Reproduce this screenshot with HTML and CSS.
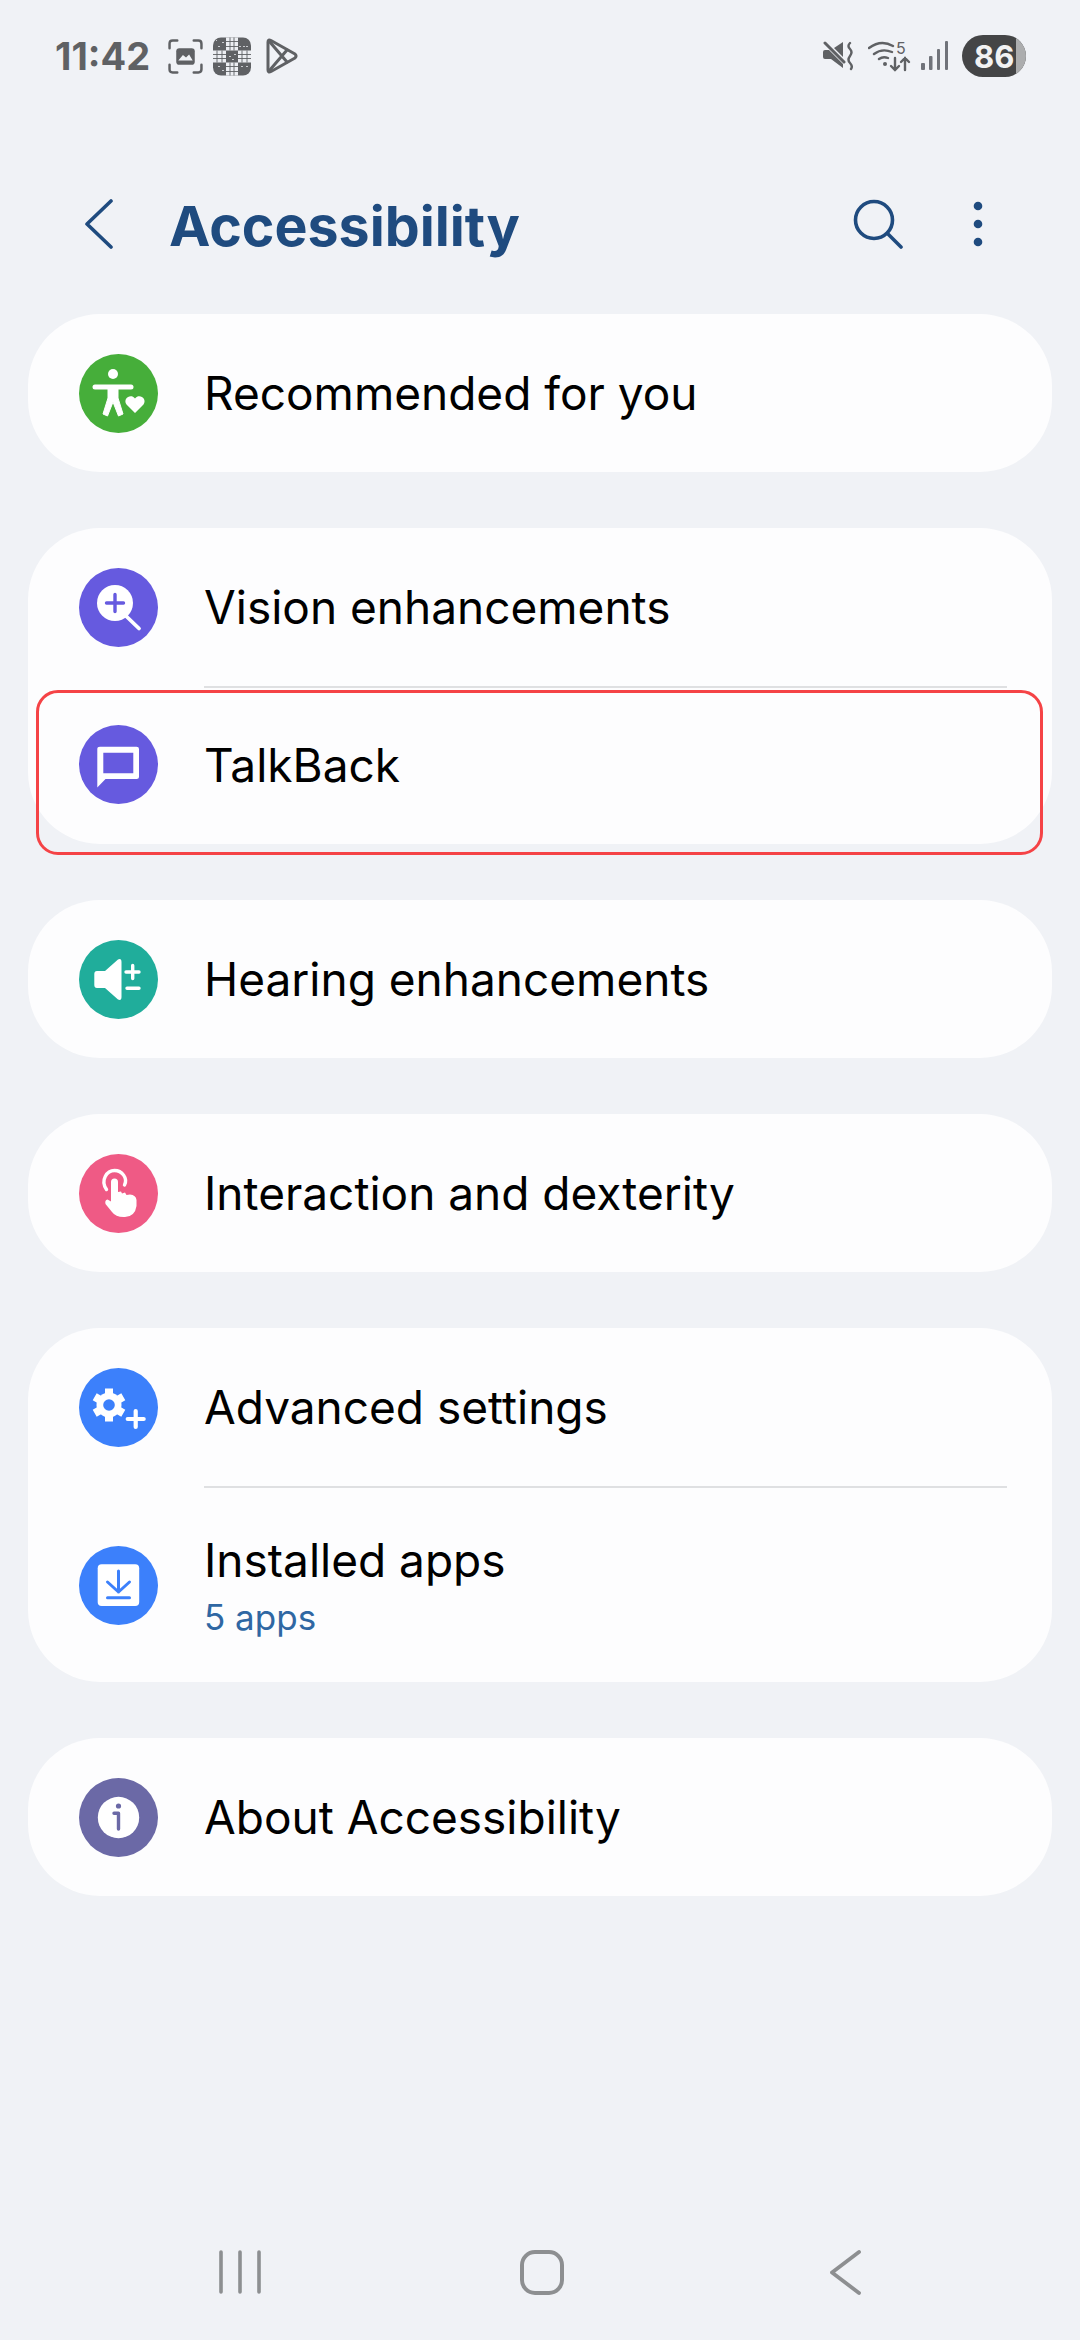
FILE: index.html
```html
<!DOCTYPE html>
<html lang="en">
<head>
    <meta charset="UTF-8">
    <meta name="viewport" content="width=device-width, initial-scale=1.0">
    <title>Accessibility</title>
    <link rel="stylesheet" href="styles.css">
</head>
<body>
    <div class="status-bar">
        <span class="clock">11:42</span>
        <svg class="st-shot" width="35" height="35" viewBox="0 0 34 34" fill="none" stroke="#5f6164" stroke-width="2.4" stroke-linecap="round">
            <path d="M1.500 9V4.500Q1.500 1.500 4.500 1.500H9M25 1.500H29.500Q32.500 1.500 32.500 4.500V9M32.500 25V29.500Q32.500 32.500 29.500 32.500H25M9 32.500H4.500Q1.500 32.500 1.500 29.500V25"/>
            <rect x="8" y="9" width="18" height="16" rx="3" fill="#5f6164" stroke="none"/>
            <path d="M10 21L14.500 15.500L17.500 18L20.500 15L24 21" fill="#f0f2f6" stroke="none"/>
        </svg>
        <svg class="st-grid" width="38" height="39" viewBox="0 0 38 38">
            <rect x="0" y="0" width="38" height="38" rx="8" fill="#5f6164"/>
            <g fill="#eceef2">
                <rect x="13" y="0" width="12" height="13"/>
                <rect x="0" y="13" width="13" height="12"/>
                <rect x="25" y="13" width="13" height="12"/>
                <rect x="13" y="25" width="12" height="13"/>
            </g>
            <g stroke="#5f6164" stroke-width="0.9">
                <path d="M17 0V13M21 0V13M17 25V38M21 25V38M0 17H13M0 21H13M25 17H38M25 21H38M4 13V25M9 13V25M29 13V25M34 13V25M13 4H25M13 9H25M13 29H25M13 34H25"/>
            </g>
            <g stroke="#c9cbcf" stroke-width="1">
                <path d="M5 9h2M9 5h2M3 3h1M30 9h2M26 9h2M33 9h2M28 29h2M33 29h2M5 29h2M9 33h2M16 19h2M21 17h2M19 22h2"/>
            </g>
        </svg>
        <svg class="st-play" width="32" height="36" viewBox="0 0 32 36" fill="none" stroke="#5f6164" stroke-width="3" stroke-linejoin="round" stroke-linecap="round">
            <path d="M2 4Q2 1 5 2.500L29 16Q31 18 29 20L5 33.500Q2 35 2 32Z"/>
            <path d="M3 3L21 24M3 33L21 12"/>
        </svg>
        <span class="status-gap"></span>
        <svg class="st-mute" width="30" height="30" viewBox="0 0 30 30" fill="none">
            <path d="M2 9H6L20 23V27L8 18H2Q0 18 0 16V11Q0 9 2 9Z" fill="#5f6164"/>
            <path d="M11 7L20 1V16Z" fill="#5f6164"/>
            <path d="M2 2L21 21" stroke="#5f6164" stroke-width="3" stroke-linecap="round"/>
            <path d="M27 2Q24 5 27 8T27 15T27 22T28 28" stroke="#5f6164" stroke-width="2.400" stroke-linecap="round"/>
        </svg>
        <svg class="st-wifi" width="44" height="40" viewBox="0 -4 44 40" fill="none" stroke="#5f6164" stroke-width="2.400" stroke-linecap="round">
            <path d="M1 8Q13 -1 25 6M6 14Q14 8 24 12M11 19Q15 16 20 18"/>
            <circle cx="17" cy="24" r="2" fill="#5f6164" stroke="none"/>
            <path d="M27 18V30M23 26L27 30L31 26M37 30V18M33 22L37 18L41 22"/>
            <text class="wifi-five" x="28" y="14">5</text>
        </svg>
        <svg class="st-signal" width="27" height="30" viewBox="0 0 27 30" fill="#70737a">
            <rect x="0" y="22" width="4" height="7" rx="1"/>
            <rect x="8" y="15" width="3.500" height="14" rx="1"/>
            <rect x="16" y="8" width="3" height="21" rx="1"/>
            <rect x="24" y="0" width="3" height="29" rx="1"/>
        </svg>
        <div class="battery"><span class="battery-level"></span><span class="battery-num">86</span></div>
    </div>

    <div class="app-bar">
        <svg class="back-icon" width="28" height="50" viewBox="0 0 28 50" fill="none" stroke="#1f4b7f" stroke-width="3.600" stroke-linecap="round" stroke-linejoin="round">
            <path d="M26 2L2 25L26 48"/>
        </svg>
        <h1 class="title">Accessibility</h1>
        <svg class="search-icon" width="50" height="50" viewBox="0 0 50 50" fill="none" stroke="#1f4b7f" stroke-width="3.600" stroke-linecap="round">
            <circle cx="21" cy="21" r="18.500"/>
            <path d="M34.500 34.500L48 48"/>
        </svg>
        <svg class="more-icon" width="10" height="46" viewBox="0 0 10 46" fill="#1f4b7f">
            <circle cx="5" cy="5" r="4.300"/>
            <circle cx="5" cy="23" r="4.300"/>
            <circle cx="5" cy="41" r="4.300"/>
        </svg>
    </div>

    <div class="list">
        <div class="card">
            <div class="row">
                <svg class="row-icon" viewBox="0 0 79 79">
                    <circle cx="39.500" cy="39.500" r="39.500" fill="#46ae3a"/>
                    <circle cx="34" cy="20" r="5" fill="#fff"/>
                    <path d="M16 33H52" stroke="#fff" stroke-width="5" stroke-linecap="round"/>
                    <path d="M29 33H39V44L44 60L39.500 62L34 48L28.500 62L24 60L29 44Z" fill="#fff" stroke="#fff" stroke-width="1" stroke-linejoin="round"/>
                    <path d="M56 59L47.500 50.500C43.500 45 51.500 39 56 44.500C60.500 39 68.500 45 64.500 50.500Z" fill="#fff"/>
                </svg>
                <span class="row-text">Recommended for you</span>
            </div>
        </div>

        <div class="card">
            <div class="row">
                <svg class="row-icon" viewBox="0 0 79 79">
                    <circle cx="39.500" cy="39.500" r="39.500" fill="#665adf"/>
                    <circle cx="36" cy="35" r="18" fill="#fff"/>
                    <path d="M36 26.500V43.500M27.500 35H44.500" stroke="#665adf" stroke-width="3.400" stroke-linecap="round"/>
                    <path d="M47 48L60 60.500" stroke="#fff" stroke-width="3.800" stroke-linecap="round"/>
                </svg>
                <span class="row-text">Vision enhancements</span>
            </div>
            <div class="divider"></div>
            <div class="row row-talkback">
                <svg class="row-icon" viewBox="0 0 79 79">
                    <circle cx="39.500" cy="39.500" r="39.500" fill="#665adf"/>
                    <path fill-rule="evenodd" d="M21 21.700H57.500Q60 21.700 60 24V51.500Q60 54 57.500 54H26.500L18.300 62.500V24Q18.300 21.700 21 21.700ZM24.300 27.700V48.300H54.300V27.700Z" fill="#fff"/>
                </svg>
                <span class="row-text">TalkBack</span>
                <div class="highlight"></div>
            </div>
        </div>

        <div class="card">
            <div class="row">
                <svg class="row-icon" viewBox="0 0 79 79">
                    <circle cx="39.500" cy="39.500" r="39.500" fill="#20ad9b"/>
                    <path d="M18 31H26L39 19.500Q42.500 18 42.500 22V57Q42.500 61 39 59.500L26 48H18Q15.300 48 15.300 45V34Q15.300 31 18 31Z" fill="#fff"/>
                    <path d="M53.700 25.500V38.500M47 32H60M48 48.300H60" stroke="#fff" stroke-width="3.400" stroke-linecap="round"/>
                </svg>
                <span class="row-text">Hearing enhancements</span>
            </div>
        </div>

        <div class="card">
            <div class="row">
                <svg class="row-icon" viewBox="0 0 79 79">
                    <circle cx="39.500" cy="39.500" r="39.500" fill="#ef5a85"/>
                    <path d="M27.500 35.500C21 26 28 16.500 35.500 16.500C43 16.500 49 24 45.500 31" fill="none" stroke="#fff" stroke-width="3.400" stroke-linecap="round"/>
                    <path d="M32 28Q32 24.500 35.500 24.500Q39 24.500 39 28V38L42 37.500L43 39.500L46 38.500L47.500 41L51 40.500Q57 41 57.500 46V52Q56 62.500 46 63Q37 63.500 33 58L26.500 50Q25.500 46 28.500 45.500L32 47.500Z" fill="#fff"/>
                </svg>
                <span class="row-text">Interaction and dexterity</span>
            </div>
        </div>

        <div class="card">
            <div class="row">
                <svg class="row-icon" viewBox="0 0 79 79">
                    <circle cx="39.500" cy="39.500" r="39.500" fill="#3c80fb"/>
                    <circle cx="30" cy="37" r="12.500" fill="#fff"/>
                    <path d="M30 20.500V53.500M15.700 28.750L44.300 45.250M15.700 45.250L44.300 28.750" stroke="#fff" stroke-width="8"/>
                    <circle cx="30" cy="37" r="5.800" fill="#3c80fb"/>
                    <path d="M56.700 43V59M48.700 51H64.700" stroke="#fff" stroke-width="4.200" stroke-linecap="round"/>
                </svg>
                <span class="row-text">Advanced settings</span>
            </div>
            <div class="divider"></div>
            <div class="row row-tall">
                <svg class="row-icon" viewBox="0 0 79 79">
                    <circle cx="39.500" cy="39.500" r="39.500" fill="#3c80fb"/>
                    <rect x="18.700" y="18.300" width="41.500" height="41.700" rx="4" fill="#fff"/>
                    <path d="M39.500 25V46M28.500 36L39.500 46L50.500 36M28.500 51.700H50.500" fill="none" stroke="#3c80fb" stroke-width="3" stroke-linecap="round" stroke-linejoin="round"/>
                </svg>
                <div class="row-stack">
                    <span class="row-text">Installed apps</span>
                    <span class="row-sub">5 apps</span>
                </div>
            </div>
        </div>

        <div class="card">
            <div class="row">
                <svg class="row-icon" viewBox="0 0 79 79">
                    <circle cx="39.500" cy="39.500" r="39.500" fill="#6b69a6"/>
                    <circle cx="39.500" cy="39.500" r="20.700" fill="#fff"/>
                    <circle cx="39.500" cy="28" r="2.600" fill="#6b69a6"/>
                    <path d="M35 35.300H39.500V51" fill="none" stroke="#6b69a6" stroke-width="3.400" stroke-linecap="round" stroke-linejoin="round"/>
                </svg>
                <span class="row-text">About Accessibility</span>
            </div>
        </div>
    </div>

    <div class="nav-bar">
        <svg class="nav-icon" width="42" height="44" viewBox="0 0 42 44" stroke="#8d8f91" stroke-width="3.600" stroke-linecap="round">
            <path d="M2 2V42M21 2V42M40 2V42"/>
        </svg>
        <svg class="nav-icon" width="44" height="45" viewBox="0 0 44 45" fill="none" stroke="#8d8f91" stroke-width="4">
            <rect x="2" y="2" width="40" height="41" rx="13"/>
        </svg>
        <svg class="nav-icon nav-back" width="31" height="45" viewBox="0 0 31 45" fill="none" stroke="#8d8f91" stroke-width="3.800" stroke-linecap="round" stroke-linejoin="round">
            <path d="M29 2L2 22.500L29 43"/>
        </svg>
    </div>
</body>
</html>
```

FILE: styles.css
```css
* {
    box-sizing: border-box;
}
html, body {
    margin: 0;
    padding: 0;
}
body {
    width: 1080px;
    height: 2340px;
    background-color: #f0f2f6;
    font-family: Inter, "Noto Sans", sans-serif;
    color: #000;
    display: flex;
    flex-direction: column;
    overflow: hidden;
}

/* status bar */
.status-bar {
    height: 112px;
    padding: 0 54px 0 55px;
    display: flex;
    align-items: center;
    flex-shrink: 0;
}
.clock {
    font-size: 38px;
    font-weight: 700;
    color: #5f6164;
    width: 113px;
}
.st-grid {
    margin-left: 10px;
}
.st-play {
    margin-left: 15px;
}
.status-gap {
    flex: 1;
}
.st-wifi {
    margin-left: 15px;
}
.st-signal {
    margin-left: 9px;
}
.wifi-five {
    font-family: Inter, sans-serif;
    font-size: 16px;
    fill: #5f6164;
    stroke: none;
}
.battery {
    position: relative;
    width: 64px;
    height: 42px;
    margin-left: 14px;
    border-radius: 21px;
    background-color: #444546;
    overflow: hidden;
    display: flex;
    align-items: center;
    padding-left: 12px;
}
.battery-level {
    position: absolute;
    top: 0;
    right: 0;
    bottom: 0;
    width: 10px;
    background-color: #acadae;
}
.battery-num {
    position: relative;
    font-size: 31px;
    font-weight: 700;
    color: #f2f2f2;
}

/* title row */
.app-bar {
    height: 202px;
    padding: 22px 0 0 85px;
    display: flex;
    align-items: center;
    flex-shrink: 0;
}
.title {
    margin: 2px 0 0 56px;
    font-size: 55.5px;
    font-weight: 700;
    color: #1f4b7f;
    flex: 1;
}
.search-icon {
    margin-right: -1px;
}
.more-icon {
    margin-left: 71px;
    margin-right: 97px;
}

/* setting cards */
.list {
    flex: 1;
    padding: 0 28px;
    display: flex;
    flex-direction: column;
    gap: 56px;
}
.card {
    background-color: #fdfdfe;
    border-radius: 72px;
}
.row {
    height: 158px;
    padding-left: 51px;
    display: flex;
    align-items: center;
    gap: 46px;
}
.row-icon {
    width: 79px;
    height: 79px;
    flex-shrink: 0;
}
.row-text {
    font-size: 46px;
    font-weight: 400;
    color: #000;
}
.row-stack {
    display: flex;
    flex-direction: column;
    gap: 8px;
}
.row-sub {
    font-size: 35px;
    color: #2f67a3;
}
.divider {
    height: 2px;
    margin: 0 45px 0 176px;
    background-color: #dfe0e2;
}
.row-talkback {
    position: relative;
    height: 156px;
    padding-bottom: 3px;
}
.row-tall {
    height: 194px;
}
.highlight {
    position: absolute;
    left: 8px;
    right: 9px;
    top: 2px;
    height: 165px;
    border: 3px solid #f54346;
    border-radius: 22px;
}

/* bottom navigation */
.nav-bar {
    height: 132px;
    padding: 42px 0 0 219px;
    display: flex;
    align-items: flex-start;
    gap: 259px;
    flex-shrink: 0;
}
.nav-back {
    margin-left: 7px;
}
```
